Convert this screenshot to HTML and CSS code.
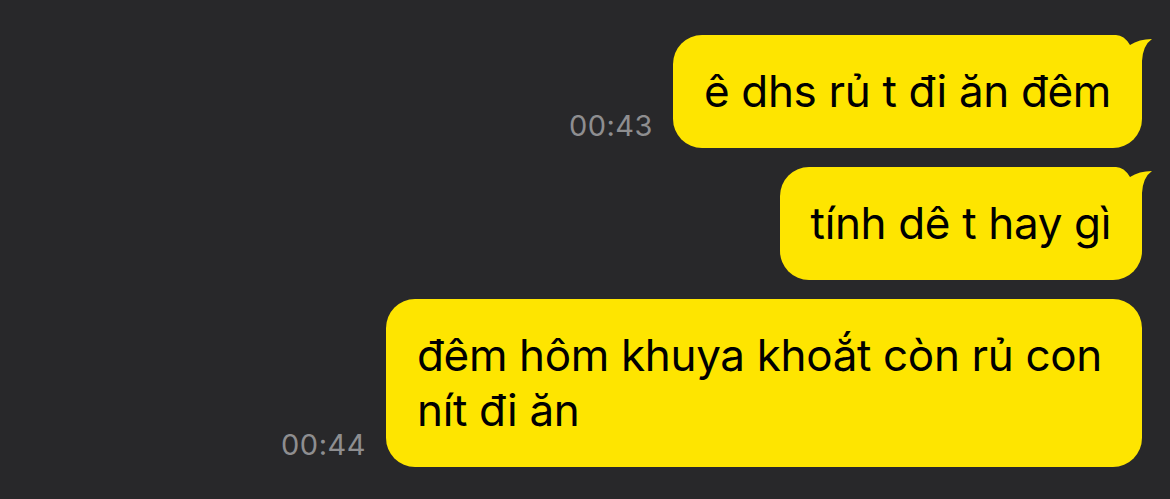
FILE: index.html
```html
<!DOCTYPE html>
<html lang="vi">
<head>
    <meta charset="UTF-8">
    <meta name="viewport" content="width=device-width, initial-scale=1.0">
    <title>Chat</title>
    <link rel="stylesheet" href="styles.css">
</head>
<body>
    <div class="messages">
        <div class="row">
            <span class="time">00:43</span>
            <div class="bubble has-tail">
                ê dhs rủ t đi ăn đêm
                <svg class="tail" viewBox="0 0 42 42" width="42" height="42">
                    <rect x="0" y="0" width="42" height="42" fill="#28282a"/>
                    <path d="M0,0 L4,0 Q12,0 18,10 Q27,4 40,4 Q31,10 30,26 L30,42 L0,42 Z" fill="#fee500"/>
                </svg>
            </div>
        </div>
        <div class="row">
            <div class="bubble has-tail">
                tính dê t hay gì
                <svg class="tail" viewBox="0 0 42 42" width="42" height="42">
                    <rect x="0" y="0" width="42" height="42" fill="#28282a"/>
                    <path d="M0,0 L4,0 Q12,0 18,10 Q27,4 40,4 Q31,10 30,26 L30,42 L0,42 Z" fill="#fee500"/>
                </svg>
            </div>
        </div>
        <div class="row">
            <span class="time">00:44</span>
            <div class="bubble">đêm hôm khuya khoắt còn rủ con nít đi ăn</div>
        </div>
    </div>
</body>
</html>
```

FILE: styles.css
```css
body {
    margin: 0;
    padding: 0;
    background-color: #28282a;
    font-family: Inter, "Noto Sans", sans-serif;
    height: 100vh;
    overflow: hidden;
}
.messages {
    display: flex;
    flex-direction: column;
    align-items: flex-end;
    gap: 19px;
    padding: 35px 28px 0 0;
}
.row {
    display: flex;
    align-items: flex-end;
    gap: 20px;
}
.time {
    color: #8e8e90;
    font-size: 29px;
    line-height: 1;
    letter-spacing: 0.5px;
    margin-bottom: 8px;
}
.bubble {
    position: relative;
    background-color: #fee500;
    color: #000;
    font-size: 44px;
    line-height: 55px;
    letter-spacing: -0.35px;
    padding: 29px 31px;
    border-radius: 29px;
    width: max-content;
    max-width: 694px;
}
.bubble.has-tail {
    border-top-right-radius: 0;
}
/* cái đuôi của bong bóng */
.tail {
    position: absolute;
    top: 0;
    right: -12px;
    display: block;
}
```
